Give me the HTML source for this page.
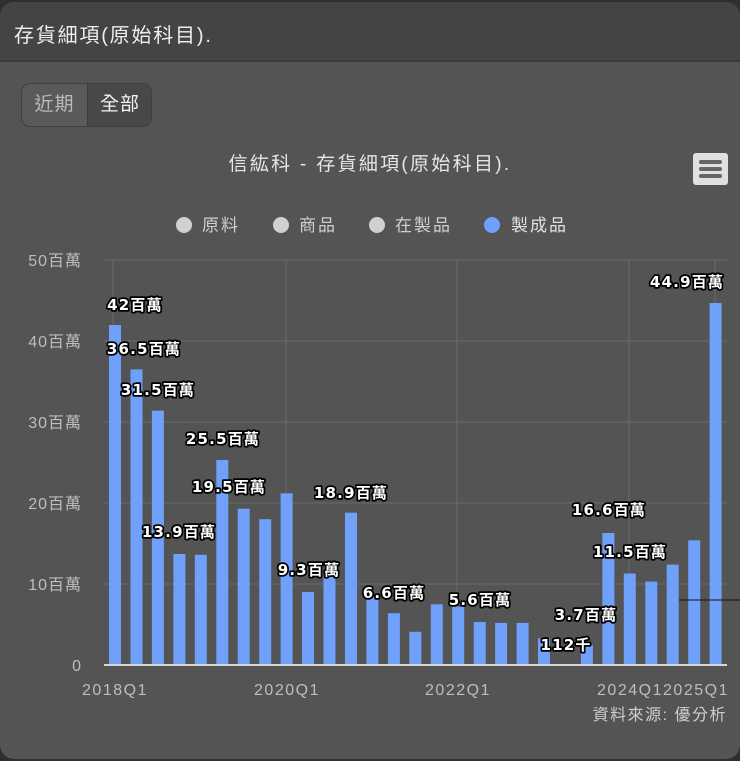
<!DOCTYPE html>
<html><head><meta charset="utf-8"><style>
html,body{margin:0;padding:0;background:#2f2f2f;width:740px;height:761px;overflow:hidden}
.card{position:absolute;left:0;top:2px;width:740px;height:757px;background:#545454;border-radius:14px;overflow:hidden;font-family:"Liberation Sans","Noto Sans CJK TC",sans-serif}
.hdr{position:absolute;left:0;top:0;width:740px;height:58px;background:#444;border-bottom:2px solid #3a3a3a}
.hdr span{position:absolute;left:14px;top:17px;font-size:20px;color:#eee;letter-spacing:1.8px}
.btns{position:absolute;left:21px;top:81px;width:129px;height:42px;border:1px solid #3e3e3e;border-radius:9px;overflow:hidden;background:#5a5a5a}
.btns div{position:absolute;top:0;height:42px;line-height:42px;font-size:19px;text-align:center;letter-spacing:1px}
svg{position:absolute;left:0;top:0}
</style></head><body>
<div class="card">
<div class="hdr"><span>存貨細項(原始科目).</span></div>
<div class="btns"><div style="left:0;width:65px;color:#bbb">近期</div><div style="left:65px;width:64px;background:#484848;color:#f2f2f2;border-left:1px solid #3e3e3e">全部</div></div>
</div>
<svg width="740" height="761" viewBox="0 0 740 761" font-family="Liberation Sans, Noto Sans CJK TC, sans-serif">
<text x="370" y="170" font-size="19" fill="#e6e6e6" text-anchor="middle" letter-spacing="2.3">信紘科 - 存貨細項(原始科目).</text>
<rect x="693" y="153" width="35" height="32" rx="3" fill="#e0e0e0"/>
<rect x="699" y="160" width="23" height="4" rx="2" fill="#666"/><rect x="699" y="167" width="23" height="4" rx="2" fill="#666"/><rect x="699" y="174" width="23" height="4" rx="2" fill="#666"/>
<g font-size="17" fill="#cfcfcf" letter-spacing="2">
<circle cx="184" cy="225" r="8" fill="#d0d0d0"/><text x="202" y="231">原料</text>
<circle cx="281" cy="225" r="8" fill="#d0d0d0"/><text x="299" y="231">商品</text>
<circle cx="377" cy="225" r="8" fill="#d0d0d0"/><text x="395" y="231">在製品</text>
<circle cx="492" cy="225" r="8" fill="#6fa0fa"/><text x="511" y="231" fill="#e0e0e0">製成品</text>
</g>
<g stroke="#6a6a6a" stroke-width="1">
<line x1="104" y1="260" x2="727" y2="260"/><line x1="104" y1="341" x2="727" y2="341"/><line x1="104" y1="422" x2="727" y2="422"/><line x1="104" y1="503" x2="727" y2="503"/><line x1="104" y1="584" x2="727" y2="584"/>
<line x1="113" y1="260" x2="113" y2="665"/><line x1="286" y1="260" x2="286" y2="665"/><line x1="457" y1="260" x2="457" y2="665"/><line x1="629" y1="260" x2="629" y2="665"/><line x1="715" y1="260" x2="715" y2="665"/>
</g>
<g font-size="16" fill="#bdbdbd" text-anchor="end" letter-spacing="1">
<text x="82" y="266">50百萬</text><text x="82" y="347">40百萬</text><text x="82" y="428">30百萬</text><text x="82" y="509">20百萬</text><text x="82" y="590">10百萬</text><text x="82" y="671">0</text>
</g>
<g fill="#6fa0fa">
<rect x="109" y="325" width="12" height="340"/>
<rect x="130.5" y="369.4" width="12" height="295.6"/>
<rect x="151.9" y="410.7" width="12" height="254.3"/>
<rect x="173.4" y="554" width="12" height="111"/>
<rect x="194.8" y="554.8" width="12" height="110.2"/>
<rect x="216.3" y="460" width="12" height="205"/>
<rect x="237.7" y="508.7" width="12" height="156.3"/>
<rect x="259.2" y="519.2" width="12" height="145.8"/>
<rect x="280.6" y="493.3" width="12" height="171.7"/>
<rect x="302" y="592" width="12" height="73"/>
<rect x="323.5" y="576.7" width="12" height="88.3"/>
<rect x="345" y="512.7" width="12" height="152.3"/>
<rect x="366.4" y="597" width="12" height="68"/>
<rect x="387.9" y="613.2" width="12" height="51.8"/>
<rect x="409.3" y="631.8" width="12" height="33.2"/>
<rect x="430.8" y="604.3" width="12" height="60.7"/>
<rect x="452.2" y="606.7" width="12" height="58.3"/>
<rect x="473.7" y="622" width="12" height="43"/>
<rect x="495.1" y="622.9" width="12" height="42.1"/>
<rect x="516.6" y="622.9" width="12" height="42.1"/>
<rect x="538" y="638.3" width="12" height="26.7"/>
<rect x="559.5" y="664" width="12" height="1"/>
<rect x="580.9" y="644.8" width="12" height="20.2"/>
<rect x="602.4" y="533" width="12" height="132"/>
<rect x="623.8" y="573.5" width="12" height="91.5"/>
<rect x="645.3" y="581.6" width="12" height="83.4"/>
<rect x="666.7" y="564.6" width="12" height="100.4"/>
<rect x="688.2" y="540.3" width="12" height="124.7"/>
<rect x="709.6" y="303" width="12" height="362"/>
</g>
<line x1="104" y1="665" x2="727" y2="665" stroke="#d8d8d8" stroke-width="2"/>
<line x1="679" y1="600" x2="740" y2="600" stroke="#111" stroke-width="1"/>
<g font-family="DejaVu Sans, Noto Sans CJK TC, sans-serif" font-size="15" font-weight="bold" fill="#fff" stroke="#000" stroke-width="3.5" stroke-linejoin="round" paint-order="stroke" text-anchor="middle" letter-spacing="1.2">
<text x="135" y="310">42百萬</text>
<text x="144" y="354">36.5百萬</text>
<text x="158" y="395">31.5百萬</text>
<text x="223" y="444">25.5百萬</text>
<text x="229" y="492">19.5百萬</text>
<text x="179" y="537">13.9百萬</text>
<text x="351" y="498">18.9百萬</text>
<text x="309" y="575">9.3百萬</text>
<text x="394" y="598">6.6百萬</text>
<text x="480" y="605">5.6百萬</text>
<text x="586" y="620">3.7百萬</text>
<text x="566" y="650">112千</text>
<text x="609" y="515">16.6百萬</text>
<text x="630" y="557">11.5百萬</text>
<text x="687" y="287">44.9百萬</text>
</g>
<g font-size="16" fill="#bdbdbd" text-anchor="middle" letter-spacing="1.5">
<text x="115" y="695">2018Q1</text><text x="287" y="695">2020Q1</text><text x="458" y="695">2022Q1</text><text x="630" y="695">2024Q1</text><text x="696" y="695">2025Q1</text>
</g>
<text x="727" y="720" font-size="16" fill="#cfcfcf" text-anchor="end" letter-spacing="1.5">資料來源: 優分析</text>
</svg>
</body></html>
